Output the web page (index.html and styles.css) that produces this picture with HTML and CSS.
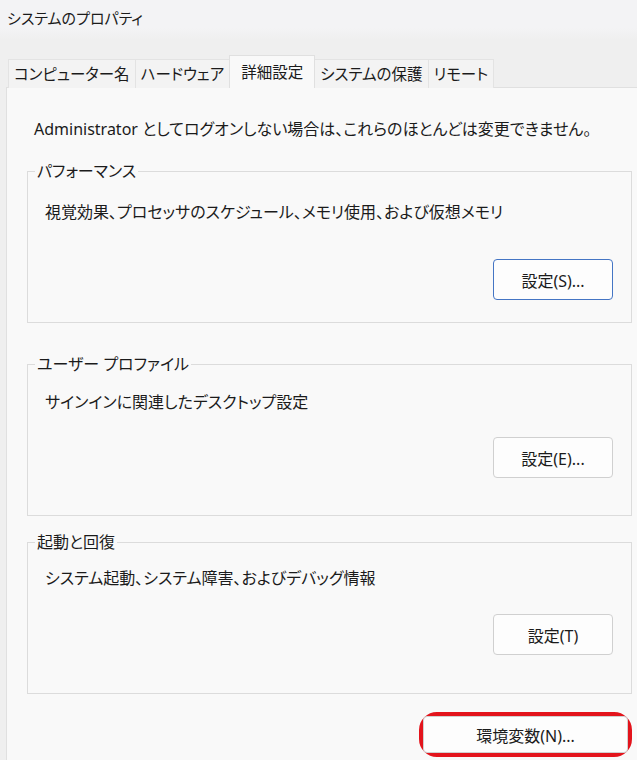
FILE: index.html
```html
<!DOCTYPE html>
<html lang="ja">
<head>
    <meta charset="UTF-8">
    <meta name="viewport" content="width=device-width, initial-scale=1.0">
    <title>システムのプロパティ</title>
    <link rel="stylesheet" href="styles.css">
</head>
<body>
    <div class="window">
        <header class="titlebar">システムのプロパティ</header>

        <nav class="tabs">
            <div class="tab">コンピューター名</div>
            <div class="tab">ハードウェア</div>
            <div class="tab active">詳細設定</div>
            <div class="tab">システムの保護</div>
            <div class="tab">リモート</div>
        </nav>

        <section class="panel">
            <p class="notice">Administrator としてログオンしない場合は、これらのほとんどは変更できません。</p>

            <fieldset class="group group-perf">
                <legend>パフォーマンス</legend>
                <p class="desc">視覚効果、プロセッサのスケジュール、メモリ使用、および仮想メモリ</p>
                <div class="actions">
                    <button class="btn default">設定(S)...</button>
                </div>
            </fieldset>

            <fieldset class="group group-profile">
                <legend>ユーザー プロファイル</legend>
                <p class="desc">サインインに関連したデスクトップ設定</p>
                <div class="actions">
                    <button class="btn">設定(E)...</button>
                </div>
            </fieldset>

            <fieldset class="group group-startup">
                <legend>起動と回復</legend>
                <p class="desc">システム起動、システム障害、およびデバッグ情報</p>
                <div class="actions">
                    <button class="btn">設定(T)</button>
                </div>
            </fieldset>

            <div class="footer">
                <div class="highlight">
                    <button class="btn wide">環境変数(N)...</button>
                </div>
            </div>
        </section>
    </div>
</body>
</html>
```

FILE: styles.css
```css
body {
    margin: 0;
    font-family: "Noto Sans", "Noto Sans CJK JP", sans-serif;
    font-feature-settings: "palt";
    font-size: 16px;
    color: #1b1b1b;
    background-color: #efefef;
}

.window {
    width: 637px;
    height: 760px;
    display: flex;
    flex-direction: column;
    overflow: hidden;
}

.titlebar {
    height: 40px;
    line-height: 36px;
    padding-left: 7px;
    font-size: 15px;
    background: linear-gradient(#f3f3f5 70%, #efefef);
}

/* Tab strip */
.tabs {
    display: flex;
    align-items: flex-end;
    height: 47px;
    padding-left: 8px;
    position: relative;
    z-index: 1;
}

.tab {
    height: 28px;
    line-height: 28px;
    padding: 0 5px;
    font-size: 15.5px;
    background-color: #f3f3f3;
    border: 1px solid #e3e3e3;
    border-bottom: none;
    margin-right: -1px;
    margin-bottom: -1px;
}

.tab.active {
    height: 32px;
    line-height: 32px;
    padding: 0 11px;
    background-color: #f9f9f9;
    border-color: #e0e0e0;
    position: relative;
    z-index: 2;
}

/* Tab page */
.panel {
    flex: 1;
    margin-left: 6px;
    background-color: #f9f9f9;
    border-top: 1px solid #e0e0e0;
    border-left: 1px solid #e0e0e0;
    padding: 0 5px 0 20px;
}

.notice {
    margin: 29px 0 0 7px;
    line-height: 24px;
}

.group {
    margin: 0;
    padding: 0 18px 0 17px;
    border: 1px solid #dcdcdc;
    box-sizing: border-box;
}

.group legend {
    padding: 0 2px;
    margin-left: -10px;
    line-height: 24px;
}

.desc {
    margin: 0;
    line-height: 24px;
}

.actions {
    display: flex;
    justify-content: flex-end;
}

.group-perf {
    margin-top: 18px;
    height: 164px;
}

.group-perf .desc {
    margin-top: 17px;
}

.group-perf .actions {
    margin-top: 35px;
}

.group-profile {
    margin-top: 29px;
    height: 164px;
}

.group-profile .desc {
    margin-top: 14px;
}

.group-profile .actions {
    margin-top: 23px;
}

.group-startup {
    margin-top: 14px;
    height: 164px;
}

.group-startup .desc {
    margin-top: 12px;
}

.group-startup .actions {
    margin-top: 24px;
}

.btn {
    width: 120px;
    height: 41px;
    font-family: inherit;
    font-feature-settings: "palt";
    font-size: 16px;
    color: #1b1b1b;
    background-color: #fdfdfd;
    border: 1px solid #d0d0d0;
    border-radius: 4px;
    padding: 0;
}

.btn.default {
    border-color: #4475c4;
}

.btn.wide {
    width: 205px;
    height: 37px;
    display: block;
}

.footer {
    display: flex;
    justify-content: flex-end;
    margin-top: 18px;
}

/* red annotation drawn around the env-vars button */
.highlight {
    border: 4px solid #e3141c;
    border-radius: 18px;
    padding: 0;
}
```
